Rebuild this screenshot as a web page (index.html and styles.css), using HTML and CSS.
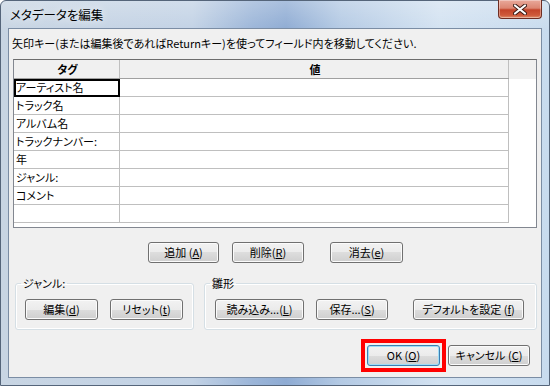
FILE: index.html
```html
<!DOCTYPE html>
<html lang="ja">
<head>
  <meta charset="UTF-8">
  <title>メタデータを編集</title>
  <link rel="stylesheet" href="styles.css">
</head>
<body>
  <div class="window">
    <div class="titlebar">
      <span class="title">メタデータを編集</span>
      <button class="close" aria-label="閉じる">
        <svg width="14" height="11" viewBox="0 0 14 11">
          <path d="M2 1.5 L12 9.5 M12 1.5 L2 9.5" stroke="#3a1a14" stroke-width="4" stroke-linecap="round"/>
          <path d="M2 1.5 L12 9.5 M12 1.5 L2 9.5" stroke="#fff" stroke-width="2.2" stroke-linecap="round"/>
        </svg>
      </button>
    </div>

    <div class="client">
      <p class="hint">矢印キー(または編集後であればReturnキー)を使ってフィールド内を移動してください.</p>

      <div class="grid">
        <table>
          <thead>
            <tr><th class="col-tag">タグ</th><th class="col-value">値</th><th class="col-rest"></th></tr>
          </thead>
          <tbody>
            <tr><td class="focus">アーティスト名</td><td></td><td class="rest"></td></tr>
            <tr><td>トラック名</td><td></td><td class="rest"></td></tr>
            <tr><td>アルバム名</td><td></td><td class="rest"></td></tr>
            <tr><td>トラックナンバー:</td><td></td><td class="rest"></td></tr>
            <tr><td>年</td><td></td><td class="rest"></td></tr>
            <tr><td>ジャンル:</td><td></td><td class="rest"></td></tr>
            <tr><td>コメント</td><td></td><td class="rest"></td></tr>
            <tr><td></td><td></td><td class="rest"></td></tr>
          </tbody>
        </table>
      </div>

      <div class="actions">
        <button class="btn w71">追加 (<u>A</u>)</button>
        <button class="btn w72">削除(<u>R</u>)</button>
        <button class="btn w73 gap-wide">消去(<u>e</u>)</button>
      </div>

      <div class="groups">
        <fieldset class="group genre">
          <legend>ジャンル:</legend>
          <div class="group-buttons">
            <button class="btn w73">編集(<u>d</u>)</button>
            <button class="btn w73">リセット(<u>t</u>)</button>
          </div>
        </fieldset>
        <fieldset class="group template">
          <legend>雛形</legend>
          <div class="group-buttons">
            <button class="btn w89">読み込み...(<u>L</u>)</button>
            <button class="btn w72">保存...(<u>S</u>)</button>
            <button class="btn w111 gap-wide">デフォルトを設定 (<u>f</u>)</button>
          </div>
        </fieldset>
      </div>

      <div class="footer">
        <span class="highlight">
          <button class="btn btn-default w73">OK (<u>O</u>)</button>
        </span>
        <button class="btn w82">キャンセル (<u>C</u>)</button>
      </div>
    </div>
  </div>
</body>
</html>
```

FILE: styles.css
```css
body {
  margin: 0;
  font-family: "Noto Sans CJK JP", "Noto Sans", sans-serif;
  font-feature-settings: "palt";
  font-size: 11px;
  color: #000;
  background: #fff;
}

.window {
  width: 550px;
  height: 386px;
  box-sizing: border-box;
  padding: 0 7px 7px 7px;
  display: flex;
  flex-direction: column;
  border: 1px solid #55657a;
  border-radius: 6px 6px 0 0;
  background:
    linear-gradient(180deg, rgba(255,255,255,0.25) 0, rgba(255,255,255,0) 30px),
    linear-gradient(90deg, #c8d5e3 0%, #c2d2e5 35%, #9bb5d8 46%, #8eabd3 52%, #b4cae4 62%, #d3e2f1 80%, #c8dbee 100%);
}

.titlebar {
  height: 27px;
  display: flex;
  align-items: flex-start;
  justify-content: space-between;
}

.title {
  margin: 5px 0 0 2px;
  font-size: 12.5px;
  line-height: 17px;
  color: #000;
  text-shadow: 0 0 8px rgba(255,255,255,0.9);
}

.close {
  width: 44px;
  height: 19px;
  margin: -1px 0 0 0;
  padding: 0;
  display: flex;
  align-items: center;
  justify-content: center;
  border: 1px solid #6e2c22;
  border-top: none;
  border-radius: 0 0 4px 4px;
  background: linear-gradient(180deg, #e9a99b 0%, #dc8672 45%, #c4442a 55%, #cf5a3b 85%, #e0926f 100%);
  box-shadow: inset 0 0 0 1px rgba(255,255,255,0.35);
}

.client {
  flex: 1;
  border: 1px solid #7b8da4;
  background: #f0f0f0;
  display: flex;
  flex-direction: column;
}

.hint {
  margin: 0;
  padding: 7px 0 9px 3px;
  line-height: 14px;
}

.grid {
  margin-left: 4px;
  width: 524px;
  height: 169px;
  box-sizing: border-box;
  border: 1px solid #828790;
  border-top-color: #6c6c6c;
  background: #fff;
}

.grid table {
  border-collapse: collapse;
  width: 100%;
  table-layout: fixed;
}

.grid th,
.grid td {
  height: 17px;
  padding: 0 0 0 2px;
  line-height: 17px;
  white-space: nowrap;
  text-align: left;
  border-right: 1px solid #bfbfbf;
  border-bottom: 1px solid #bfbfbf;
}

.grid th {
  height: 18px;
  text-align: center;
  font-weight: bold;
  background: #f0f0f0;
  border-bottom-color: #a0a0a0;
}

.col-tag { width: 103px; }
.col-value { width: 386px; }

.grid .col-rest,
.grid .rest {
  border: none;
}

.grid td.focus {
  outline: 2px solid #000;
  outline-offset: -2px;
}

.btn {
  height: 21px;
  box-sizing: border-box;
  padding: 0;
  font-family: inherit;
  font-feature-settings: "palt";
  font-size: 11px;
  line-height: 17px;
  color: #000;
  border: 1px solid #707070;
  border-radius: 3px;
  background: linear-gradient(180deg, #f2f2f2 0%, #ebebeb 50%, #dddddd 50%, #cfcfcf 100%);
  box-shadow: inset 0 0 0 1px #fbfbfb;
}

.btn u { text-underline-offset: 1px; }

.btn-default {
  border-color: #3c7fb1;
  box-shadow: inset 0 0 0 1px #9fdcf6;
}

.w71 { width: 71px; }
.w72 { width: 72px; }
.w73 { width: 73px; }
.w82 { width: 82px; }
.w89 { width: 89px; }
.w111 { width: 111px; }

.actions {
  margin-top: 14px;
  padding-left: 139px;
  display: flex;
  gap: 13px;
}

.gap-wide { margin-left: 13px; }

.groups {
  margin-top: 13px;
  padding: 0 4px 0 6px;
  display: flex;
  gap: 10px;
}

.group {
  margin: 0;
  padding: 0 0 9px 0;
  border: 1px solid #d5dfe5;
  border-radius: 3px;
  box-shadow: inset 0 0 0 1px #fff;
}

.group legend {
  margin-left: 5px;
  padding: 0 2px;
  line-height: 14px;
}

.genre { width: 179px; box-sizing: border-box; }
.template { flex: 1; }

.group-buttons {
  margin-top: 9px;
  display: flex;
  gap: 12px;
}

.genre .group-buttons { padding-left: 9px; }
.template .group-buttons { padding-left: 10px; }

.footer {
  margin-top: 9px;
  padding-right: 11px;
  display: flex;
  justify-content: flex-end;
  align-items: center;
  gap: 2px;
}

.highlight {
  display: flex;
  padding: 2px;
  border: 4px solid #f00;
}
```
